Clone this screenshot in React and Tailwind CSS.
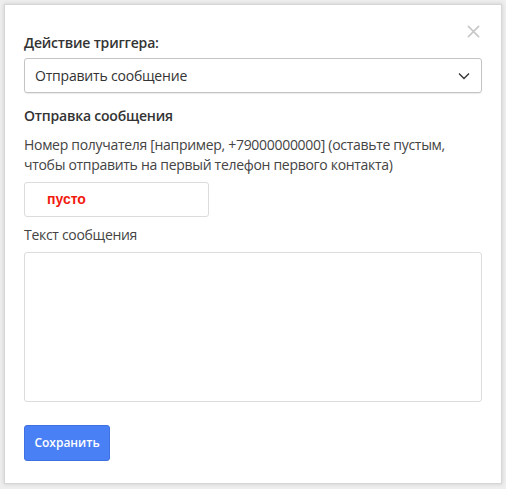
export default function App() {
  return (
    <div className="w-[506px] h-[489px] bg-[#eeeeee] relative overflow-hidden" style={{ fontFamily: '"Open Sans", "Noto Sans", sans-serif' }}>
      <div className="absolute left-[4px] top-[4px] w-[498px] h-[480px] bg-white border border-[#d6d6d6] shadow-[0_0_4px_rgba(0,0,0,0.15)] pt-[28px] px-[19px] text-[#333]">
        <button className="absolute right-[19px] top-[19px] w-[15px] h-[15px] text-[#c8c8c8]">
          <svg viewBox="0 0 14 14" className="w-[13px] h-[13px]" fill="none" stroke="currentColor" strokeWidth="1.8" strokeLinecap="round">
            <path d="M1.5 1.5 L12.5 12.5 M12.5 1.5 L1.5 12.5" />
          </svg>
        </button>
        <div className="text-[14px] font-semibold leading-[20px] tracking-[-0.2px]">Действие триггера:</div>
        <div className="mt-[5px] h-[35px] w-[458px] border border-[#c4c4c4] rounded-[3px] flex items-center justify-between px-[10px] shadow-[0_1px_1px_rgba(0,0,0,0.08)]">
          <span className="text-[14px] tracking-[-0.2px]">Отправить сообщение</span>
          <svg viewBox="0 0 12 8" className="w-[12px] h-[8px] mr-[1px]" fill="none" stroke="#333" strokeWidth="1.3">
            <path d="M1 1.5 L6 6.5 L11 1.5" />
          </svg>
        </div>
        <div className="mt-[13px] text-[14px] font-semibold leading-[20px] tracking-[-0.2px]">Отправка сообщения</div>
        <div className="mt-[9px] text-[14px] leading-[20px] tracking-[-0.3px] text-[#444]">
          Номер получателя [например, +79000000000] (оставьте пустым, чтобы отправить на первый телефон первого контакта)
        </div>
        <div className="mt-[7px] w-[185px] h-[35px] border border-[#dcdcdc] rounded-[3px] flex items-center pl-[22px]">
          <span className="text-[14px] font-bold text-[#f21a0f]" style={{ fontFamily: '"Liberation Sans", Arial, sans-serif' }}>пусто</span>
        </div>
        <div className="mt-[8px] text-[14px] leading-[20px] tracking-[-0.3px] text-[#444]">Текст сообщения</div>
        <div className="mt-[7px] w-[458px] h-[150px] border border-[#dcdcdc] rounded-[3px]"></div>
        <button className="mt-[23px] w-[86px] h-[36px] bg-[#4a80f5] border border-[#3f72e0] rounded-[3px] text-white text-[12px] font-semibold">Сохранить</button>
      </div>
    </div>
  );
}
